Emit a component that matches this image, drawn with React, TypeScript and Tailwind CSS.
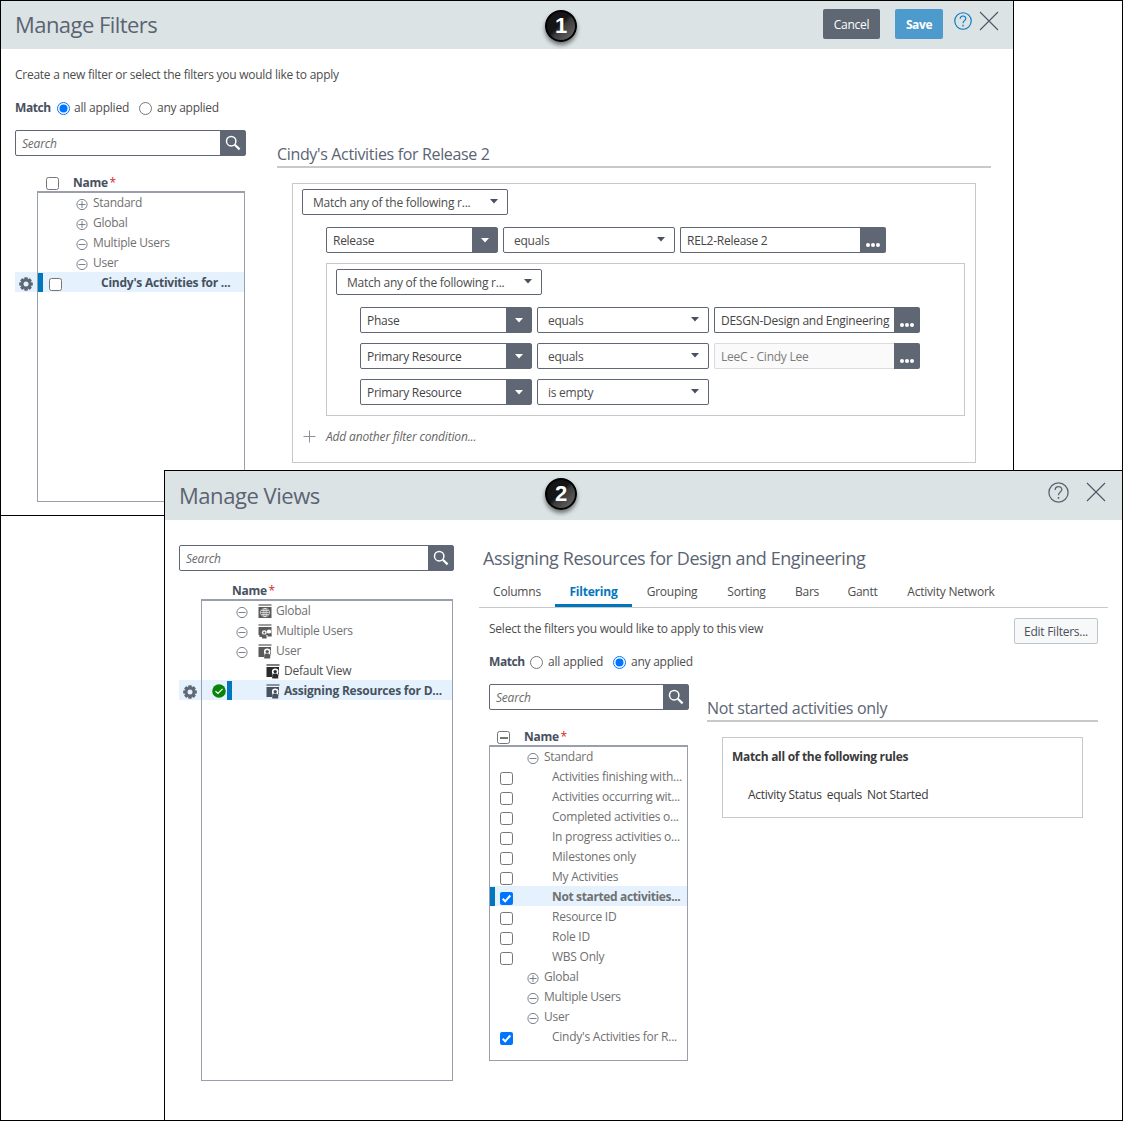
import type { ReactNode } from 'react';
import clsx from 'clsx';

function SearchIcon() {
  return (
    <svg width="16" height="16" viewBox="0 0 16 16" fill="none" stroke="#fff">
      <circle cx="6.2" cy="6.2" r="4.7" strokeWidth="1.5" />
      <path d="M9.8 9.8L14.6 14.4" strokeWidth="2.2" />
    </svg>
  );
}

function SearchBox({ className }: { className: string }) {
  return (
    <div className={clsx('flex h-[26px] rounded-[2px] border border-[#5f6775] bg-white', className)}>
      <div className="flex-1 pl-1.5 pt-px leading-[24px] italic text-[#6b6b6b] tracking-[-0.2px]">Search</div>
      <div className="flex w-[25px] items-center justify-center bg-[#5f6775]">
        <SearchIcon />
      </div>
    </div>
  );
}

function HelpIcon({ size, color }: { size: number; color: string }) {
  return (
    <svg width={size} height={size} viewBox="0 0 21 21" fill="none" stroke={color} strokeWidth="1.3">
      <circle cx="10.5" cy="10.5" r="9.6" />
      <path d="M7.2 8c0-4.400 6.600-4.400 6.600-.4 0 2.600-3.300 2.400-3.300 5.600" />
      <path d="M10.5 15v1.800" strokeWidth="1.5" />
    </svg>
  );
}

function CloseIcon() {
  return (
    <svg width="20" height="20" viewBox="0 0 20 20" stroke="#4f5766" strokeWidth="1.1">
      <path d="M1 1L19 19M19 1L1 19" />
    </svg>
  );
}

function GearIcon() {
  return (
    <svg width="14" height="14" viewBox="0 0 14 14">
      <g fill="#5f6775">
        <rect x="5.2" y="0.2" width="3.6" height="13.6" rx="0.8" />
        <rect x="5.2" y="0.2" width="3.6" height="13.6" rx="0.8" transform="rotate(45 7 7)" />
        <rect x="5.2" y="0.2" width="3.6" height="13.6" rx="0.8" transform="rotate(90 7 7)" />
        <rect x="5.2" y="0.2" width="3.6" height="13.6" rx="0.8" transform="rotate(135 7 7)" />
        <circle cx="7" cy="7" r="4.900" />
      </g>
      <circle cx="7" cy="7" r="2.5" fill="#e5f2fd" />
    </svg>
  );
}

function Expander({ open }: { open: boolean }) {
  return (
    <svg width="12" height="12" viewBox="0 0 12 12" fill="none" stroke="#6b7482" strokeWidth="0.9">
      <circle cx="6" cy="5.5" r="5.1" />
      <path d={open ? 'M2.500 5.500h7' : 'M2.500 5.500h7M6 2v7'} />
    </svg>
  );
}

type ViewKind = 'global' | 'multi' | 'user';

function ViewIcon({ kind, color }: { kind: ViewKind; color: string }) {
  return (
    <svg width="14" height="15" viewBox="0 0 14 15">
      <rect x="0.5" y="0" width="13" height="2" fill={color} opacity="0.6" />
      {kind === 'global' && (
        <>
          <rect x="0.5" y="3" width="13" height="11" fill={color} />
          <g fill="none" stroke="#fff" strokeWidth="0.6">
            <ellipse cx="7" cy="8.5" rx="4.6" ry="4.2" />
            <ellipse cx="7" cy="8.5" rx="2" ry="4.2" />
            <path d="M2.500 8.500h9M3.200 6.500h7.600M3.200 10.500h7.600M7 4.300v8.400" />
          </g>
        </>
      )}
      {kind === 'multi' && (
        <>
          <path d="M0.500 3h13v8h-13zM0.500 3h5v10h-4z" fill={color} />
          <circle cx="6.300" cy="8.600" r="2.400" fill="#fff" />
          <circle cx="11" cy="7.600" r="2.200" fill="#fff" />
          <circle cx="6.300" cy="8.600" r="1.100" fill={color} />
          <path d="M4 14.500v-2.800l1.400-1.200h1.800l1.400 1.200v2.800zM9.500 12.500v-2l1-1h1.800l1.400 1v2z" fill={color} />
        </>
      )}
      {kind === 'user' && (
        <>
          <path d="M0.500 3h12.500v7.500h-12.500zM0.500 3h5.500v10h-5.500z" fill={color} />
          <circle cx="9.200" cy="7.800" r="3.300" fill="#fff" />
          <circle cx="9.200" cy="7.600" r="1.700" fill={color} />
          <path d="M6.200 14.500v-3.300l1.600-1.700h2.800l1.600 1.700v3.300z" fill={color} />
        </>
      )}
    </svg>
  );
}

function Checkbox({ state = 'off' }: { state?: 'off' | 'on' | 'mixed' }) {
  if (state === 'on') {
    return (
      <svg width="13" height="13" viewBox="0 0 13 13" className="block">
        <rect width="13" height="13" rx="2" fill="#0075ff" />
        <path d="M2.700 6.800L5.200 9.300L10.300 3.500" fill="none" stroke="#fff" strokeWidth="2" />
      </svg>
    );
  }
  return (
    <div className="flex h-[13px] w-[13px] items-center justify-center rounded-[2.5px] border border-[#767676] bg-white">
      {state === 'mixed' && <div className="h-0.5 w-[8px] bg-[#767676]" />}
    </div>
  );
}

function Radio({ checked }: { checked?: boolean }) {
  return (
    <svg width="13" height="13" viewBox="0 0 13 13" className="block">
      <circle cx="6.5" cy="6.5" r="6" fill="#fff" stroke={checked ? '#0075ff' : '#767676'} />
      {checked && <circle cx="6.5" cy="6.5" r="4" fill="#0075ff" />}
    </svg>
  );
}

function MatchRow({ value }: { value: 'all' | 'any' }) {
  return (
    <div className="flex h-5 items-center text-[#4d4d4d]">
      <span className={clsx('font-bold text-[#475160] tracking-[-0.4px]', value === 'all' ? 'w-[42px]' : 'w-[41px]')}>
        Match
      </span>
      <Radio checked={value === 'all'} />
      <span className={clsx('ml-1 tracking-[-0.2px]', value === 'all' ? 'w-[65px]' : 'w-[66px] pl-px')}>
        all applied
      </span>
      <Radio checked={value === 'any'} />
      <span className="ml-[5px] tracking-[-0.25px]">any applied</span>
    </div>
  );
}

function NameHeader({ className }: { className?: string }) {
  return (
    <span className={clsx('font-bold text-[#475160] tracking-[-0.3px]', className)}>
      Name <span className="-ml-px font-normal text-[#d8232a]">*</span>
    </span>
  );
}

function Caret({ className }: { className?: string }) {
  return (
    <svg width="8" height="5" viewBox="0 0 8 5" className={className}>
      <path d="M0 0h8L4 4.500z" fill="currentColor" />
    </svg>
  );
}

function Select({ label, wide }: { label: string; wide?: boolean }) {
  return (
    <div
      className={clsx(
        'flex h-[26px] justify-between rounded-[2px] border border-[#5f6775] pl-2.5 pr-[9px] text-[#4d4d4d]',
        wide ? 'w-[206px]' : 'w-[172px]',
      )}
    >
      <span className="leading-[26px] tracking-[-0.25px]">{label}</span>
      <Caret className="mt-[9px] text-[#475160]" />
    </div>
  );
}

function Combo({ label }: { label: string }) {
  return (
    <div className="flex h-[26px] w-[172px] rounded-[2px] border border-[#5f6775]">
      <span className="flex-1 pl-1.5 leading-[26px] text-[#444] tracking-[-0.27px]">{label}</span>
      <div className="flex w-[25px] items-center justify-center bg-[#5f6775] text-white">
        <Caret />
      </div>
    </div>
  );
}

function Picker({ label, disabled }: { label: string; disabled?: boolean }) {
  return (
    <div className="flex h-[26px] w-[206px]">
      <span
        className={clsx(
          'flex-1 overflow-hidden whitespace-nowrap rounded-l-[2px] border border-r-0 pl-1.5 leading-[26px] tracking-[-0.26px]',
          disabled ? 'border-[#dcdcdc] bg-[#fafafa] text-[#7c7c7c]' : 'border-[#5f6775] text-[#444]',
        )}
      >
        {label}
      </span>
      <div className="flex w-[26px] justify-center gap-px rounded-r-[2px] bg-[#5f6775] pt-4">
        <i className="size-1 rounded-full bg-white" />
        <i className="size-1 rounded-full bg-white" />
        <i className="size-1 rounded-full bg-white" />
      </div>
    </div>
  );
}

function StepBadge({ n }: { n: number }) {
  return (
    <div className="absolute left-[545px] flex size-8 items-center justify-center rounded-full border-2 border-black bg-linear-to-br from-[#151515] from-45% via-[#3a3a3a] via-55% to-[#707070] font-['Liberation_Sans'] text-[22px] font-bold leading-none text-white shadow-[0_3px_4px_rgba(0,0,0,0.5)]">
      {n}
    </div>
  );
}

interface FilterRowProps {
  label: string;
  open?: boolean;
  group?: boolean;
  checked?: boolean;
  selected?: boolean;
  inset?: boolean;
}

function FilterRow({ label, open = false, group, checked, selected, inset }: FilterRowProps) {
  if (group) {
    return (
      <div className={clsx('flex h-5', inset ? 'pl-[37px]' : 'pl-[38px]')}>
        <div className="w-[17px] pt-[7px]">
          <Expander open={open} />
        </div>
        <span className="leading-[22px] tracking-[-0.27px]">{label}</span>
      </div>
    );
  }
  return (
    <div className={clsx('flex h-5', selected && 'bg-[#e5f2fd] font-bold')}>
      <div className={clsx('mt-px h-[19px] w-[5px]', selected && 'bg-[#0076be]')} />
      <div className={clsx('pt-1.5', inset ? 'w-[57px] pl-[5px]' : 'w-[58px] pl-1.5')}>
        <Checkbox state={checked ? 'on' : 'off'} />
      </div>
      <span
        className={clsx(
          'whitespace-nowrap leading-[22px]',
          inset && selected ? 'tracking-[-0.36px]' : 'tracking-[-0.24px]',
          selected && !inset && 'text-[#475160]',
        )}
      >
        {label}
      </span>
    </div>
  );
}

const filterRows: FilterRowProps[] = [
  { label: 'Standard', group: true, open: true },
  { label: 'Activities finishing with...' },
  { label: 'Activities occurring wit...' },
  { label: 'Completed activities o...' },
  { label: 'In progress activities o...' },
  { label: 'Milestones only' },
  { label: 'My Activities' },
  { label: 'Not started activities...', checked: true, selected: true },
  { label: 'Resource ID' },
  { label: 'Role ID' },
  { label: 'WBS Only' },
  { label: 'Global', group: true },
  { label: 'Multiple Users', group: true, open: true },
  { label: 'User', group: true, open: true },
  { label: "Cindy's Activities for R...", checked: true },
];

const viewGroups: { label: string; kind: ViewKind }[] = [
  { label: 'Global', kind: 'global' },
  { label: 'Multiple Users', kind: 'multi' },
  { label: 'User', kind: 'user' },
];

const tabs = [
  { label: 'Columns', width: 'w-[76px]' },
  { label: 'Filtering', width: 'w-[77px]', active: true },
  { label: 'Grouping', width: 'w-[80px]' },
  { label: 'Sorting', width: 'w-[69px]' },
  { label: 'Bars', width: 'w-[52px]' },
  { label: 'Gantt', width: 'w-[59px]' },
  { label: 'Activity Network', width: 'w-[118px]' },
];

function SelectedGutter({ className }: { className: string }) {
  return (
    <div className={clsx('w-[22px]', className)}>
      <div className="flex h-5 items-center bg-[#e5f2fd] pl-1 pt-1">
        <GearIcon />
      </div>
    </div>
  );
}

function SectionTitle({ children }: { children: ReactNode }) {
  return (
    <h2 className="h-6 whitespace-nowrap border-b-2 border-[#c9c9c9] text-[16px] leading-[21px] text-[#5b6473] tracking-[-0.34px]">
      {children}
    </h2>
  );
}

function ManageFilters() {
  return (
    <section className="absolute left-0 top-0 h-[516px] w-[1014px] border border-black bg-white">
      <header className="flex h-12 bg-[#dce3e4] pl-3.5">
        <h1 className="w-[808px] text-[22px] leading-[47px] text-[#5b6473] tracking-[-0.55px]">Manage Filters</h1>
        <button className="mt-2 h-[30px] w-[57px] rounded-[2px] bg-[#5f6775] pt-0.5 text-white tracking-[-0.25px]">
          Cancel
        </button>
        <button className="ml-[15px] mt-2 h-[30px] w-12 rounded-[2px] bg-[#4d9acc] pt-0.5 font-bold text-white tracking-[-0.4px]">
          Save
        </button>
        <div className="ml-[11px] mt-[11px]">
          <HelpIcon size={18} color="#0076be" />
        </div>
        <div className="ml-[7px] mt-2.5">
          <CloseIcon />
        </div>
        <div className="absolute -left-px top-[9px]">
          <StepBadge n={1} />
        </div>
      </header>

      <div className="pl-3.5 pt-4">
        <p className="h-5 leading-5 text-[#4d4d4d] tracking-[-0.26px]">
          Create a new filter or select the filters you would like to apply
        </p>
        <div className="pt-[13px]">
          <MatchRow value="all" />
        </div>

        <div className="flex pt-3">
          {/* Filter tree */}
          <div className="w-[262px]">
            <SearchBox className="w-[231px]" />
            <div className="flex h-[35px] pl-[31px] pt-[21px]">
              <Checkbox />
              <NameHeader className="pl-3.5 leading-[12px]" />
            </div>
            <div className="flex">
              <SelectedGutter className="pt-[81px]" />
              <div className="h-[311px] w-[208px] border border-t-2 border-[#9aa0ab] text-[#707070]">
                <div className="-mt-px">
                  <FilterRow group label="Standard" />
                  <FilterRow group label="Global" />
                  <FilterRow group open label="Multiple Users" />
                  <FilterRow group open label="User" />
                  <FilterRow selected label="Cindy's Activities for ..." />
                </div>
              </div>
            </div>
          </div>

          {/* Rule editor */}
          <div className="w-[714px] pt-[14px]">
            <SectionTitle>Cindy's Activities for Release 2</SectionTitle>
            <div className="ml-[15px] mt-[15px] h-[280px] w-[684px] border border-[#c9c9c9] pl-[9px] pt-[5px]">
              <Select wide label="Match any of the following r..." />
              <div className="ml-6 mt-3 flex gap-[5px]">
                <Combo label="Release" />
                <Select label="equals" />
                <Picker label="REL2-Release 2" />
              </div>
              <div className="ml-6 mt-2.5 h-[153px] w-[639px] border border-[#c9c9c9] pl-[9px] pt-[5px]">
                <Select wide label="Match any of the following r..." />
                <div className="ml-6 mt-3 flex flex-col gap-2.5">
                  <div className="flex gap-[5px]">
                    <Combo label="Phase" />
                    <Select label="equals" />
                    <Picker label="DESGN-Design and Engineering" />
                  </div>
                  <div className="flex gap-[5px]">
                    <Combo label="Primary Resource" />
                    <Select label="equals" />
                    <Picker disabled label="LeeC - Cindy Lee" />
                  </div>
                  <div className="flex gap-[5px]">
                    <Combo label="Primary Resource" />
                    <Select label="is empty" />
                  </div>
                </div>
              </div>
              <div className="mt-[11px] flex h-5 items-center text-[#666]">
                <svg width="13" height="13" viewBox="0 0 13 13" stroke="#8b909a" className="ml-px -mt-0.5">
                  <path d="M0.500 6.500h12M6.500 0.500v12" />
                </svg>
                <span className="pl-2.5 italic tracking-[-0.16px]">Add another filter condition...</span>
              </div>
            </div>
          </div>
        </div>
      </div>
    </section>
  );
}

function ManageViews() {
  return (
    <section className="absolute left-[164px] top-[470px] h-[651px] w-[959px] border border-black bg-white">
      <header className="flex h-[49px] bg-[#dce3e4] pl-3.5">
        <h1 className="w-[869px] text-[22px] leading-[49px] text-[#5b6473] tracking-[-0.45px]">Manage Views</h1>
        <div className="mt-[11px]">
          <HelpIcon size={21} color="#5b6473" />
        </div>
        <div className="ml-[17px] mt-[11px]">
          <CloseIcon />
        </div>
        <div className="absolute -left-[165px] top-[7px]">
          <StepBadge n={2} />
        </div>
      </header>

      <div className="flex pl-3.5">
        {/* View tree */}
        <div className="w-[300px] pt-[25px]">
          <SearchBox className="w-[275px]" />
          <div className="h-7 pl-[53px] pt-2.5">
            <NameHeader className="block leading-5" />
          </div>
          <div className="flex">
            <SelectedGutter className="pt-[81px]" />
            <div className="h-[482px] w-[252px] border border-t-2 border-[#9aa0ab] text-[#707070]">
              <div className="-mt-px">
                {viewGroups.map(({ label, kind }) => (
                  <div key={label} className="flex h-5 pl-[34px]">
                    <div className="w-[22px] pt-[7px]">
                      <Expander open />
                    </div>
                    <div className="w-[18px] pt-1">
                      <ViewIcon kind={kind} color="#5a5a5a" />
                    </div>
                    <span className="leading-[22px] tracking-[-0.27px]">{label}</span>
                  </div>
                ))}
                <div className="flex h-5 pl-16">
                  <div className="w-[18px] pt-1">
                    <ViewIcon kind="user" color="#2a2a2a" />
                  </div>
                  <span className="leading-[22px] text-[#4d4d4d] tracking-[-0.24px]">Default View</span>
                </div>
                <div className="flex h-5 bg-[#e5f2fd] pl-[10px]">
                  <svg width="14" height="14" viewBox="0 0 14 14" className="mt-1">
                    <circle cx="7" cy="7" r="6.800" fill="#0a830a" />
                    <path d="M3.500 7.200l2.500 2.300 4.500-4.700" fill="none" stroke="#fff" strokeWidth="1.200" />
                  </svg>
                  <div className="ml-px mt-px h-[19px] w-[5px] bg-[#0076be]" />
                  <div className="ml-[34px] w-[18px] pt-1">
                    <ViewIcon kind="user" color="#475160" />
                  </div>
                  <span className="whitespace-nowrap font-bold leading-[22px] text-[#475160] tracking-[-0.21px]">
                    Assigning Resources for D...
                  </span>
                </div>
              </div>
            </div>
          </div>
        </div>

        {/* View settings */}
        <div className="w-[629px] pt-[26px]">
          <h2 className="h-6 pl-1 text-[18px] leading-6 text-[#5b6473] tracking-[-0.42px]">
            Assigning Resources for Design and Engineering
          </h2>
          <nav className="mt-2.5 flex h-7 border-b border-[#c9c9c9]">
            {tabs.map((tab) => (
              <div
                key={tab.label}
                className={clsx(
                  'h-[27px] whitespace-nowrap text-center leading-6 tracking-[-0.22px]',
                  tab.width,
                  tab.active ? 'border-b-3 border-[#0076be] font-bold text-[#0076be]' : 'text-[#4d4d4d]',
                )}
              >
                {tab.label}
              </div>
            ))}
          </nav>

          <div className="flex justify-between pl-2.5 pr-2.5 pt-2.5">
            <div>
              <p className="h-5 pt-px leading-5 text-[#4d4d4d] tracking-[-0.24px]">
                Select the filters you would like to apply to this view
              </p>
              <div className="pt-[14px]">
                <MatchRow value="any" />
              </div>
            </div>
            <button className="h-[26px] w-[84px] rounded-[2px] border border-[#bcc5cf] bg-[#f7f8f8] pt-0.5 leading-5 text-[#475160] tracking-[-0.25px]">
              Edit Filters...
            </button>
          </div>

          <div className="flex pl-2.5 pt-3">
            <div className="w-[218px]">
              <SearchBox className="w-[200px]" />
              <div className="flex h-[35px] pl-2 pt-[21px]">
                <Checkbox state="mixed" />
                <NameHeader className="pl-3.5 leading-[12px]" />
              </div>
              <div className="h-[316px] w-[199px] border border-t-2 border-[#9aa0ab] text-[#707070]">
                <div className="-mt-px">
                  {filterRows.map((row) => (
                    <FilterRow key={row.label} {...row} inset />
                  ))}
                </div>
              </div>
            </div>

            <div className="w-[391px] pt-[14px]">
              <SectionTitle>Not started activities only</SectionTitle>
              <div className="ml-[15px] mt-[15px] h-[81px] w-[361px] border border-[#c9c9c9] pl-[9px] pt-[9px] text-[#3a3a3a]">
                <p className="leading-5 font-bold tracking-[-0.3px]">Match all of the following rules</p>
                <p className="flex gap-[5px] pl-4 pt-[18px] leading-5 tracking-[-0.28px]">
                  <span>Activity Status</span>
                  <span>equals</span>
                  <span>Not Started</span>
                </p>
              </div>
            </div>
          </div>
        </div>
      </div>
    </section>
  );
}

export default function App() {
  return (
    <main className="relative h-[1121px] w-[1123px] overflow-hidden border border-black bg-white font-['Open_Sans','Noto_Sans',sans-serif] text-[12px]">
      <div className="absolute -left-px -top-px">
        <ManageFilters />
        <ManageViews />
      </div>
    </main>
  );
}
